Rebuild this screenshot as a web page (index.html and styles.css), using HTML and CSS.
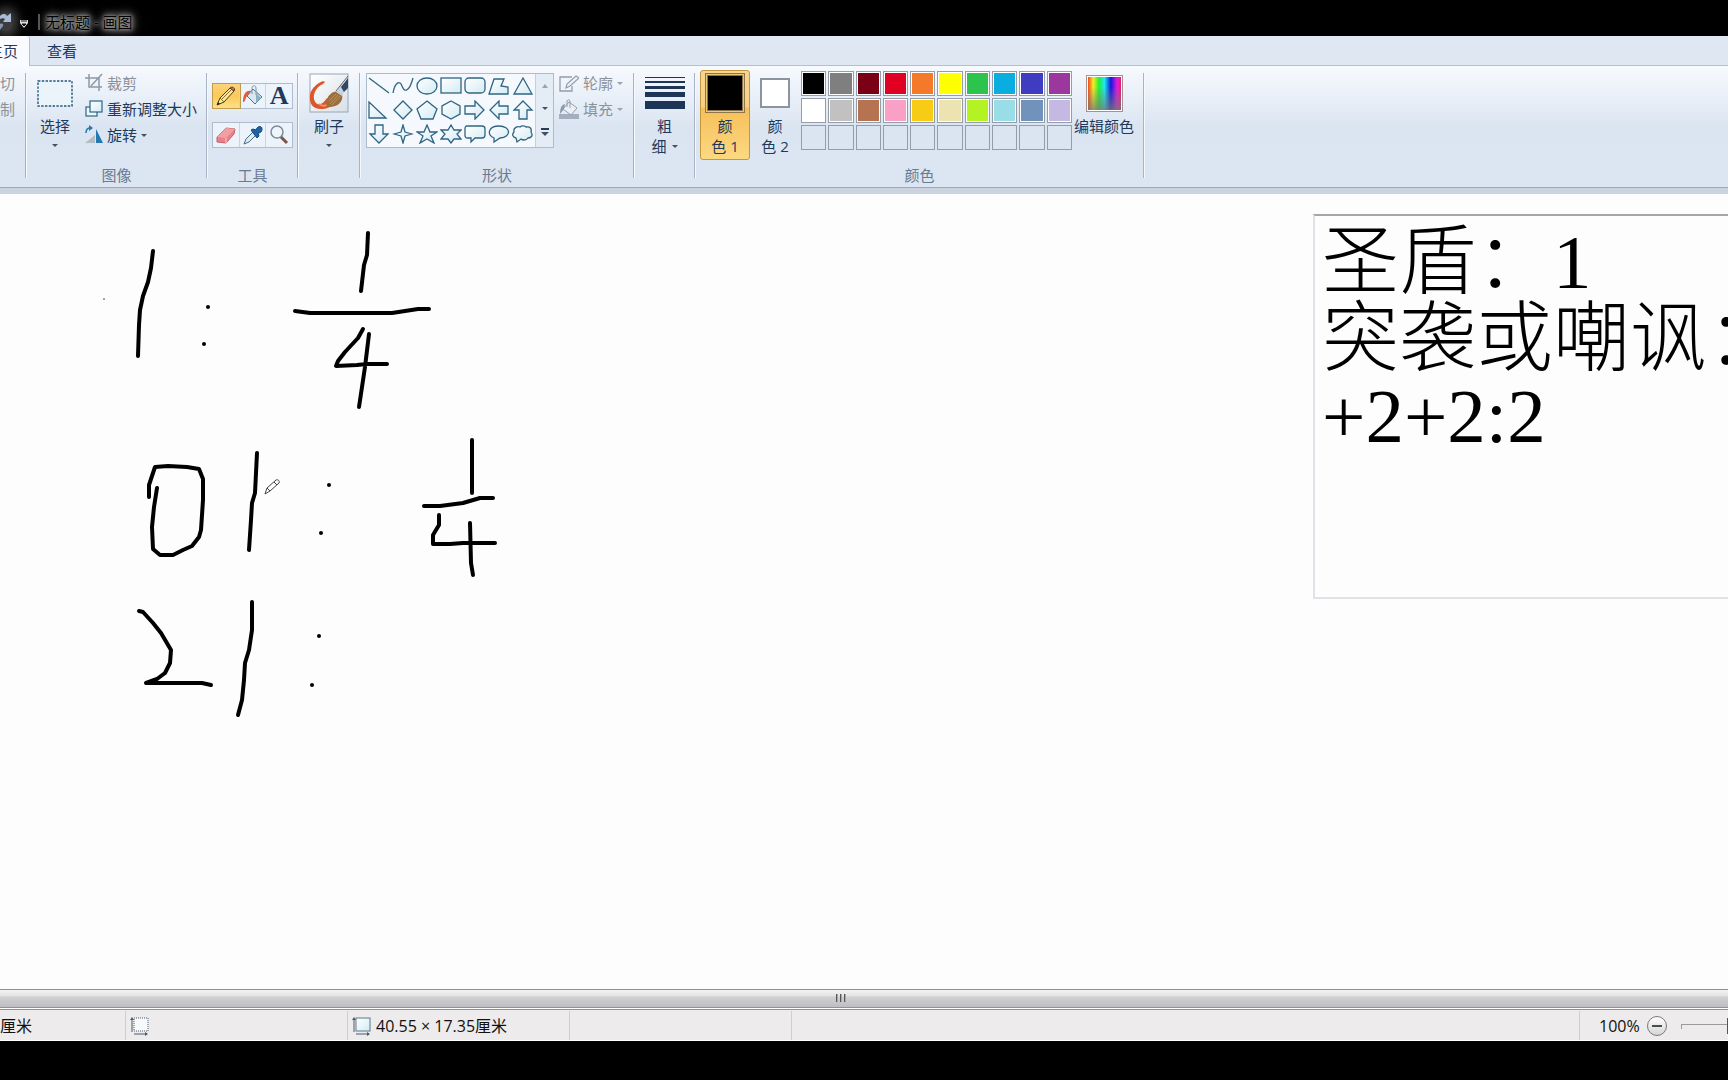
FILE: index.html
```html
<!DOCTYPE html>
<html lang="zh-CN">
<head>
<meta charset="utf-8">
<title>无标题 - 画图</title>
<link rel="stylesheet" href="styles.css">
</head>
<body>
<svg class="defs" width="0" height="0" aria-hidden="true">
  <defs>
    <linearGradient id="tint" x1="0" y1="0" x2="1" y2="1"><stop offset="0" stop-color="#fff"/><stop offset="1" stop-color="#d3ebf3"/></linearGradient>
  </defs>
</svg>
<div class="window">
  <header class="titlebar">
    <button class="redo" aria-label="重做"><svg width="12" height="18" viewBox="0 0 12 18"><path d="M0 3C3 0 6 1 7 3l4-3v9H3l2-3C4 5 2 5 0 6z" fill="#a9bcd6"/><path d="M0 11c2-1 4 0 3 2l-3 4z" fill="#8295b0"/></svg></button>
    <button class="qat" aria-label="自定义"><svg width="8" height="8" viewBox="0 0 8 8"><path d="M0 0h8v3H0zM0 3h8L4 8z" fill="#ddd"/><path d="M1 1h6M2 4h4L4 6z" stroke="#111" fill="#111"/></svg></button>
    <span class="title-sep"></span>
    <h1>无标题 - 画图</h1>
  </header>

  <nav class="tabs">
    <button class="tab active"><span>主页</span></button>
    <button class="tab">查看</button>
  </nav>

  <section class="ribbon">
    <div class="group clipboard">
      <div class="body rows">
        <button class="row muted">剪切</button>
        <button class="row muted">复制</button>
      </div>
    </div>
    <span class="sep"></span>

    <div class="group image">
      <div class="body">
        <button class="big"><span class="pic"><svg width="36" height="27" viewBox="0 0 36 27"><rect x="1" y="1" width="34" height="25" fill="#eaf4fa" stroke="#24577c" stroke-width="1.4" stroke-dasharray="2.4 1.4"/></svg></span>选择<i class="caret"></i></button>
        <div class="rows">
          <button class="row muted"><svg width="18" height="20" viewBox="0 0 18 20"><path d="M0 5h14v13M4 1v13h13M6 13L17 1" fill="none" stroke="#8d98a5" stroke-width="1.5"/></svg>裁剪</button>
          <button class="row"><svg width="18" height="18" viewBox="0 0 18 18"><rect x="1" y="7" width="11" height="9" fill="#eef8fb" stroke="#2a6484" stroke-width="1.2"/><rect x="5" y="1" width="12" height="11" fill="url(#tint)" stroke="#2a6484" stroke-width="1.2"/></svg>重新调整大小</button>
          <button class="row"><svg width="18" height="20" viewBox="0 0 18 20"><path d="M0 18L10 10v8z" fill="#b5bbc2"/><path d="M11 18V4l7 14z" fill="#2678b2"/><path d="M1 8c0-4 2-5 4-5" fill="none" stroke="#2678b2" stroke-width="1.6"/><path d="M4 0l4 3-4 3z" fill="#2678b2"/></svg>旋转<i class="caret"></i></button>
        </div>
      </div>
      <h2>图像</h2>
    </div>
    <span class="sep"></span>

    <div class="group tools">
      <div class="body toolset">
        <div class="toolrow">
          <button class="tool on" aria-label="铅笔"><svg width="22" height="22" viewBox="0 0 22 22"><path d="M2 20l3-7L15 3l4 3L9 17z" fill="#fbe79a" stroke="#4a3c18"/><path d="M5 13l4 4M7 14l9-9" stroke="#8b6b25" fill="none"/><path d="M2 20l1-3 2 2z" fill="#222"/><path d="M15 3c2-2 6 0 4 3z" fill="#d77b68" stroke="#4a3c18"/></svg></button>
          <button class="tool" aria-label="用颜色填充"><svg width="22" height="22" viewBox="0 0 22 22"><path d="M11 4l9 8-7 7-8-8z" fill="#d9e8f0" stroke="#4f7389"/><path d="M14 8l5 5-5 5" fill="#8cb0c4"/><path d="M10 9V3c0-3 4-3 4 0v7" fill="none" stroke="#8296a4"/><path d="M9 6C4 5 1 9 1 17c3 0 2-5 5-7z" fill="#df5c45"/></svg></button>
          <button class="tool letter" aria-label="文本">A</button>
        </div>
        <div class="toolrow">
          <button class="tool" aria-label="橡皮擦"><svg width="22" height="22" viewBox="0 0 22 22"><path d="M2 13L11 4l9 1-1 5-8 9-9-1z" fill="#e8818a" stroke="#c3606b"/><path d="M2 13l9 1 9-9-9-1z" fill="#f0a0a2"/><path d="M11 14v5" stroke="#fbd0cf"/></svg></button>
          <button class="tool" aria-label="颜色选取器"><svg width="22" height="22" viewBox="0 0 22 22"><path d="M2 20l2-5 8-8 3 3-8 8z" fill="#dcecf4" stroke="#4c6c80"/><path d="M9 6l2-1 3 1c1-4 6-5 6-1s-3 4-4 4l1 3-2 2z" fill="#1c64a5" stroke="#164775"/></svg></button>
          <button class="tool" aria-label="放大镜"><svg width="22" height="22" viewBox="0 0 22 22"><circle cx="9" cy="8" r="6" fill="#eef6fc" stroke="#7e8b99" stroke-width="1.5"/><path d="M13 13l6 6" stroke="#7b5748" stroke-width="3"/></svg></button>
        </div>
      </div>
      <h2>工具</h2>
    </div>
    <span class="sep"></span>

    <div class="group brush">
      <div class="body center">
        <button class="big"><span class="pic"><svg width="40" height="40" viewBox="0 0 40 40"><defs><linearGradient id="paper" x1="0" y1="0" x2="1" y2="1"><stop offset="0" stop-color="#fff"/><stop offset="1" stop-color="#d8e0e6"/></linearGradient></defs><rect x="1" y="1" width="38" height="38" fill="url(#paper)" stroke="#98a6b6"/><path d="M16 9C14 6 2 14 1 22c-1 9 3 14 11 14 5 0 11-2 14-6l-8-5c-4 6-8 8-11 5C2 25 6 14 14 11z" fill="#df5428"/><path d="M10 31c4 3 8 2 12-1" stroke="#f19167" stroke-width="2" fill="none"/><path d="M18 34c-3-9 5-18 13-15l2 2c2 8-5 14-15 13z" fill="#9d6f3d"/><path d="M21 31l8-9M23 32l8-9M20 28l7-7" stroke="#c49a63" stroke-width=".8"/><path d="M27 19l6-8 4 4-4 8z" fill="#c8d2da"/><path d="M32 14l7-9v10l-4 4z" fill="#34475e"/><path d="M27 18L39 3" stroke="#59646f"/></svg></span>刷子<i class="caret"></i></button>
      </div>
    </div>
    <span class="sep"></span>

    <div class="group shapes">
      <div class="body">
        <div class="gallery">
          <div class="grid">
            <button aria-label="直线"><svg viewBox="0 0 22 20"><path d="M1 2l20 15"/></svg></button>
            <button aria-label="曲线"><svg viewBox="0 0 22 20"><path d="M1 17C3 6 8 4 10 10s7 7 11-8"/></svg></button>
            <button aria-label="椭圆形"><svg viewBox="0 0 22 20"><ellipse cx="11" cy="10" rx="10" ry="8"/></svg></button>
            <button aria-label="矩形"><svg viewBox="0 0 22 20"><rect x="1" y="2" width="20" height="15"/></svg></button>
            <button aria-label="圆角矩形"><svg viewBox="0 0 22 20"><rect x="1" y="2" width="20" height="15" rx="4"/></svg></button>
            <button aria-label="多边形"><svg viewBox="0 0 22 20"><path d="M6 3h10l-3 7 7 1v7H1z"/></svg></button>
            <button aria-label="三角形"><svg viewBox="0 0 22 20"><path d="M11 2l9 16H2z"/></svg></button>
            <button aria-label="直角三角形"><svg viewBox="0 0 22 20"><path d="M1 2v16h17z"/></svg></button>
            <button aria-label="菱形"><svg viewBox="0 0 22 20"><path d="M11 1l9 9-9 9-9-9z"/></svg></button>
            <button aria-label="五边形"><svg viewBox="0 0 22 20"><path d="M11 1l10 8-4 10H5L1 9z"/></svg></button>
            <button aria-label="六边形"><svg viewBox="0 0 22 20"><path d="M11 1l9 5v8l-9 5-9-5V6z"/></svg></button>
            <button aria-label="右箭头"><svg viewBox="0 0 22 20"><path d="M1 6h10V1l9 9-9 9v-5H1z"/></svg></button>
            <button aria-label="左箭头"><svg viewBox="0 0 22 20"><path d="M20 6H11V1l-9 9 9 9v-5h9z"/></svg></button>
            <button aria-label="上箭头"><svg viewBox="0 0 22 20"><path d="M7 19v-9H2l9-9 9 9h-5v9z"/></svg></button>
            <button aria-label="下箭头"><svg viewBox="0 0 22 20"><path d="M7 1v9H2l9 9 9-9h-5V1z"/></svg></button>
            <button aria-label="四角星形"><svg viewBox="0 0 22 20"><path d="M11 1l2 7 7 2-7 2-2 7-2-7-7-2 7-2z"/></svg></button>
            <button aria-label="五角星形"><svg viewBox="0 0 22 20"><path d="M11 1l3 7h7l-6 4 3 7-7-4-7 4 3-7-6-4h7z"/></svg></button>
            <button aria-label="六角星形"><svg viewBox="0 0 22 20"><path d="M11 1l3 5h7l-4 4 4 5h-7l-3 4-3-4H1l4-5-4-4h7z"/></svg></button>
            <button aria-label="圆角矩形标注"><svg viewBox="0 0 22 20"><path d="M3 2h15q3 0 3 3v6q0 3-3 3h-7l-4 4v-4H3q-2 0-2-3V5q0-3 2-3z"/></svg></button>
            <button aria-label="椭圆形标注"><svg viewBox="0 0 22 20"><path d="M6 14C-2 10 1 2 11 2c12 0 13 11 1 12l-6 4z"/></svg></button>
            <button aria-label="云形标注"><svg viewBox="0 0 22 20"><path d="M4 14c-4-1-4-4-2-6-1-4 3-6 6-5 2-2 5-1 6 0 4-1 6 2 5 5 2 3 1 6-3 6-2 3-6 2-7 1l-4 3z"/></svg></button>
          </div>
          <div class="scroller">
            <button aria-label="上一行"><i class="caret up"></i></button>
            <button aria-label="下一行"><i class="caret"></i></button>
            <button aria-label="更多" class="more"><i class="caret large"></i></button>
          </div>
        </div>
        <div class="rows">
          <button class="row muted"><svg width="20" height="18" viewBox="0 0 20 18"><path d="M13 3H1v14h12v-5" fill="none" stroke="#929dac" stroke-width="1.3"/><path d="M7 14l1-4 9-8 3 2-9 8z" fill="#f0f4f8" stroke="#929dac" stroke-width="1.2"/></svg>轮廓<i class="caret"></i></button>
          <button class="row muted"><svg width="20" height="20" viewBox="0 0 20 20"><path d="M0 15h20v5H0z" fill="#a4aebf"/><path d="M10 3l8 6-6 7-8-6z" fill="#ecf0f5" stroke="#929dac"/><path d="M8 8V2q2-3 3 0v7" fill="none" stroke="#929dac"/><path d="M6 5C2 6 1 10 1 15l4-5z" fill="#8e9aab"/></svg>填充<i class="caret"></i></button>
        </div>
      </div>
      <h2>形状</h2>
    </div>
    <span class="sep"></span>

    <div class="group size">
      <div class="body center">
        <button class="big"><span class="pic"><svg width="40" height="34" viewBox="0 0 40 34"><path d="M0 1h40v1H0zM0 5h40v2H0zM0 10h40v3H0zM0 16h40v5H0zM0 25h40v8H0z" fill="#1d3557"/></svg></span>粗<span class="line">细<i class="caret"></i></span></button>
      </div>
    </div>
    <span class="sep"></span>

    <div class="group colors">
      <div class="body">
        <button class="big slot on"><span class="pic"><span class="chip first"></span></span>颜<span class="line">色 1</span></button>
        <button class="big slot"><span class="pic"><span class="chip"></span></span>颜<span class="line">色 2</span></button>
        <div class="palette">
          <button class="c black" aria-label="黑色"></button><button class="c gray" aria-label="灰色"></button><button class="c maroon" aria-label="深红色"></button><button class="c red" aria-label="红色"></button><button class="c orange" aria-label="橙色"></button><button class="c yellow" aria-label="黄色"></button><button class="c green" aria-label="绿色"></button><button class="c cyan" aria-label="青绿"></button><button class="c indigo" aria-label="靛青"></button><button class="c purple" aria-label="紫色"></button>
          <button class="c white" aria-label="白色"></button><button class="c silver" aria-label="浅灰色"></button><button class="c brown" aria-label="褐色"></button><button class="c pink" aria-label="玫瑰色"></button><button class="c gold" aria-label="金色"></button><button class="c cream" aria-label="浅黄色"></button><button class="c lime" aria-label="酸橙色"></button><button class="c aqua" aria-label="淡青绿色"></button><button class="c steel" aria-label="蓝灰色"></button><button class="c lavender" aria-label="淡紫色"></button>
          <button class="c none" aria-label="自定义 1"></button><button class="c none" aria-label="自定义 2"></button><button class="c none" aria-label="自定义 3"></button><button class="c none" aria-label="自定义 4"></button><button class="c none" aria-label="自定义 5"></button><button class="c none" aria-label="自定义 6"></button><button class="c none" aria-label="自定义 7"></button><button class="c none" aria-label="自定义 8"></button><button class="c none" aria-label="自定义 9"></button><button class="c none" aria-label="自定义 10"></button>
        </div>
        <button class="big edit"><span class="pic"><span class="spectrum"></span></span>编辑颜色</button>
      </div>
      <h2>颜色</h2>
    </div>
    <span class="sep"></span>
  </section>

  <main class="canvas">
    <svg class="ink" width="560" height="600" viewBox="0 194 560 600">
      <g fill="none" stroke="#000" stroke-width="4" stroke-linecap="round" stroke-linejoin="round">
        <path d="M153 251L151 268 148 282 143 296 140 310 139 325 138 356"/>
        <path d="M368 233L367 255 364 265 361 291"/>
        <path d="M295 311L310 313H392L418 309H429"/>
        <path d="M363 329L358 338 345 352 338 361 336 366 357 365 367 364H387M369 334L365 367 362 387 359 407"/>
        <path d="M149 497V485L155 467 168 466 187 467 199 469 203 479V500L201 530 199 537 192 546 183 550 173 555H160L153 549 152 527 154 507 157 488"/>
        <path d="M257 453L255 493 252 503 251 520 249 550"/>
        <path d="M472 440V493M424 506H440L463 503 480 498H493"/>
        <path d="M439 515V525L433 535V544H450L463 543H495M470 523L471 563 473 575"/>
        <path d="M139 611L143 612 153 623 161 633 171 650 170 663 165 673 157 679 146 683H202L211 685"/>
        <path d="M252 602V630L249 650 245 663 244 680 242 700 238 715"/>
      </g>
      <g><circle cx="208" cy="307" r="2"/><circle cx="204" cy="344" r="2"/><circle cx="329" cy="485" r="2"/><circle cx="321" cy="533" r="2"/><circle cx="319" cy="636" r="2"/><circle cx="312" cy="685" r="2"/><circle cx="104" cy="299" r=".7"/></g>
      <path d="M265 494l2-6 9-8c2-1 4 1 3 3l-9 8zM267 488l3 3M274 482l3 3" fill="#fff" stroke="#444"/>
    </svg>
    <div class="pasted">
      <p>圣盾：1</p>
      <p>突袭或嘲讽：</p>
      <p>+2+2:2</p>
    </div>
  </main>

  <div class="hscroll"><button class="grip" aria-label="水平滚动"><i></i><i></i><i></i></button></div>

  <footer class="status">
    <div class="cell pos"><span>厘米</span></div>
    <div class="cell"><svg width="20" height="20" viewBox="0 0 20 20"><path d="M2 3v13M4 18h13" stroke="#4c5a6c"/><path d="M0 4l2-3 2 3zM15 16l3 2-3 2z" fill="#4c5a6c"/><rect x="4" y="2" width="14" height="13" fill="#f7f9fb" stroke="#4c5a6c" stroke-dasharray="1 1"/></svg></div>
    <div class="cell"><svg width="20" height="20" viewBox="0 0 20 20"><path d="M2 3v13M4 18h13" stroke="#4c5a6c"/><path d="M0 4l2-3 2 3zM15 16l3 2-3 2z" fill="#4c5a6c"/><rect x="4" y="2" width="14" height="13" fill="url(#tint)" stroke="#587890"/></svg><span>40.55 × 17.35厘米</span></div>
    <div class="cell"></div>
    <div class="cell fill"></div>
    <div class="cell zoom"><label for="zoom">100%</label><button class="minus" aria-label="缩小"></button><input id="zoom" type="range" min="0" max="100" value="50"></div>
  </footer>
</div>
</body>
</html>
```

FILE: styles.css
```css
* { box-sizing: border-box; }
body { margin: 0; background: #000; }
body, button, input {
  font-family: "Open Sans", "Noto Sans CJK SC", sans-serif;
  font-size: 15px;
  line-height: 20px;
  color: #1e395b;
}
button { margin: 0; padding: 0; border: 0; background: none; white-space: nowrap; }
h1, h2, p { margin: 0; font-weight: 400; }
svg { display: block; flex: none; }
.defs { position: absolute; }

.window { display: flex; flex-direction: column; height: 100vh; padding-bottom: 39px; overflow: hidden; }

/* Title bar */
.titlebar { display: flex; align-items: center; flex: none; height: 36px; padding-top: 8px; overflow: hidden; }
.redo { width: 12px; border-radius: 8px; background: #3c3c3c; box-shadow: 0 0 10px 6px #3c3c3c; }
.qat { margin-left: 8px; padding-top: 3px; }
.title-sep { width: 2px; height: 16px; margin: 0 5px 0 10px; background: #555; }
.titlebar h1 {
  font-size: 15px;
  color: #000;
  text-shadow: 0 0 2px #999, 0 0 4px #999, 0 0 6px #888, 0 0 8px #888, 0 0 12px #777, 0 0 16px #666;
}

/* Tabs */
.tabs { display: flex; flex: none; height: 30px; background: #dfe7f2; border-bottom: 1px solid #b4c0d0; }
.tab { height: 29px; padding: 0 17px; }
.tab.active {
  display: flex;
  justify-content: flex-end;
  align-items: center;
  width: 30px;
  height: 30px;
  padding: 0 11px 0 0;
  border-right: 1px solid #b4c0d0;
  border-radius: 0 3px 0 0;
  background: #f9fbfe;
}

/* Ribbon */
.ribbon {
  display: flex;
  flex: none;
  height: 128px;
  padding-top: 4px;
  background: linear-gradient(#f7fafe, #e8eff8 32px, #dbe5f1 60px, #dce6f2 121px);
  border-bottom: 6px solid #cbd3e1;
  box-shadow: inset 0 -1px #9aa9be;
}
.sep { flex: none; width: 2px; height: 105px; margin-top: 3px; background: #a8b4c5; border-right: 1px solid #f5f8fc; }
.group { flex: none; }
.group h2 { font-size: 15px; line-height: 18px; text-align: center; color: #6a7a91; }
.body { display: flex; height: 96px; }
.center { justify-content: center; }
.clipboard { width: 25px; overflow: hidden; }
.clipboard .rows { align-items: flex-end; padding-right: 10px; }
.image { width: 179px; }
.image .body { padding-left: 10px; gap: 12px; }
.tools { width: 89px; }
.brush { width: 60px; }
.shapes { width: 272px; }
.shapes .body { padding-left: 5px; gap: 5px; }
.size { width: 59px; }
.colors { width: 447px; }
.colors .body { padding-left: 4px; }

.big { display: flex; flex-direction: column; align-items: center; height: 90px; padding-top: 3px; }
.pic { display: flex; align-items: center; justify-content: center; height: 40px; margin-bottom: 3px; }
.big > .caret { margin-top: 8px; }
.line { display: flex; align-items: center; }
.rows { display: flex; flex-direction: column; }
.row { display: flex; align-items: center; gap: 4px; height: 26px; }
.muted { color: #8c929b; }
.caret { width: 0; height: 0; border: 3px solid transparent; border-top-color: #3f5268; border-bottom: 0; }
.line .caret { margin-left: 5px; }
.muted .caret { border-top-color: #9aa3af; }

.toolset { flex-direction: column; align-items: center; gap: 13px; padding-top: 13px; }
.toolrow { display: flex; width: 81px; height: 26px; border: 1px solid #aebccd; background: #edf3fa; }
.tool { display: flex; flex: 1; align-items: center; justify-content: center; height: 24px; border-right: 1px solid #cad5e2; }
.tool:last-child { border-right: 0; }
.tool.on { background: linear-gradient(#fbd37c, #fbc95b 50%, #fde187); box-shadow: 0 0 0 1px #c29b4a; }
.letter { font: 700 26px/24px "Liberation Serif", serif; }

.gallery { display: flex; width: 188px; height: 75px; margin-top: 3px; border: 1px solid #adbccd; background: #f5f9fd; }
.grid { display: grid; flex: 1; grid-template-columns: repeat(7, 24px); grid-auto-rows: 24px; }
.grid button { display: flex; align-items: center; justify-content: center; }
.grid svg { width: 22px; height: 20px; fill: url(#tint); stroke: #2f6484; stroke-width: 1.3; }
.grid button:nth-child(-n+2) svg { fill: none; }
.scroller { display: flex; flex-direction: column; width: 18px; border-left: 1px solid #c5d0de; background: #e4ecf6; }
.scroller button { display: flex; flex: 1; align-items: center; justify-content: center; }
.caret.up { border-top: 0; border-bottom: 4px solid #9aa3af; }
.scroller .more { flex-direction: column; gap: 2px; padding-bottom: 4px; }
.more::before { content: ""; width: 8px; height: 2px; background: #2a3d56; }
.caret.large { border-width: 4px 4px 0; }

.slot { width: 50px; }
.slot.on { padding-top: 2px; border: 1px solid #c2983f; border-radius: 3px; background: linear-gradient(#f8d593, #f9cf83 36px, #f6bf58 37px, #fcd982); }
.chip { width: 30px; height: 30px; border: 2px solid #8d949e; background: #fff; }
.chip.first { width: 40px; height: 40px; border: 1px solid #8d744b; padding: 2px; background: #000; box-shadow: inset 0 0 0 1px #edc778, inset 0 0 0 2px #8d744b; }
.palette { display: grid; flex: none; width: 272px; grid-template-columns: repeat(10, 1fr); grid-auto-rows: 25px; gap: 2px; padding: 1px 0 0 1px; align-content: start; }
.c { border: 1px solid #959da8; box-shadow: inset 0 0 0 1px #fff; }
.black { background: #000; }
.gray { background: #7f7f7f; }
.maroon { background: #7a0016; }
.red { background: #e00024; }
.orange { background: #f47a2a; }
.yellow { background: #ffff00; }
.green { background: #2cc44d; }
.cyan { background: #09addf; }
.indigo { background: #403cc2; }
.purple { background: #9b379d; }
.white { background: #fff; }
.silver { background: #c1c1c1; }
.brown { background: #b67352; }
.pink { background: #fa9fc6; }
.gold { background: #f8cb14; }
.cream { background: #ede3b0; }
.lime { background: #b3f223; }
.aqua { background: #99dee7; }
.steel { background: #7092bb; }
.lavender { background: #c5b8e2; }
.none { box-shadow: none; }
.edit { width: 60px; margin-left: 2px; }
.spectrum {
  width: 37px;
  height: 37px;
  border: 1px solid #a5928c;
  box-shadow: inset 0 0 0 1px #fff;
  background: linear-gradient(transparent 30%, #777c), linear-gradient(90deg, #f02a20, #f5ee20 18%, #21ef38 34%, #1fe9f0 50%, #1616d8 68%, #e21ae0 86%, #e81d4b);
}

/* Drawing area */
.canvas { position: relative; flex: 1; min-height: 0; overflow: hidden; background: #fdfdfd; }
.ink { position: absolute; left: 0; top: 0; }
.pasted {
  position: absolute;
  left: 1313px;
  top: 20px;
  width: 560px;
  height: 385px;
  padding: 8px 0 0 7px;
  border: 2px solid #e0e2e8;
  border-top-color: #a6a6a6;
  color: #000;
  font: 77px/77px "Liberation Serif", "Noto Sans CJK SC Light", "Noto Sans CJK SC", serif;
  white-space: nowrap;
}
.pasted p { font-weight: 300; }

/* Horizontal scroll bar */
.hscroll {
  display: flex;
  justify-content: center;
  flex: none;
  height: 19px;
  padding: 0 46px 2px 0;
  border-top: 1px solid #8f9193;
  border-bottom: 1px solid #929295;
  background: linear-gradient(#f3f3f4, #e3e3e5 6px, #d0d0d3 7px, #bfbfc3);
}
.grip { display: flex; align-items: center; gap: 2px; }
.grip i { width: 2px; height: 8px; background: #555; border-right: 1px solid #aaa; }

/* Status bar */
.status { display: flex; flex: none; height: 33px; padding-top: 2px; overflow: hidden; background: #eeebec; border-top: 1px solid #fff; border-bottom: 1px solid #fff; box-shadow: inset 0 1px #8f9092; }
.cell { display: flex; align-items: center; gap: 4px; flex: none; width: 222px; padding-left: 4px; border-right: 1px solid #cfcfd2; }
.pos { width: 126px; padding: 0; }
.cell.fill { flex: 1; }
.cell.zoom { gap: 0; width: 148px; padding-left: 19px; border: 0; overflow: hidden; }
.minus {
  display: flex;
  align-items: center;
  justify-content: center;
  flex: none;
  width: 20px;
  height: 20px;
  margin: 0 14px 0 7px;
  border: 1px solid #77797c;
  border-radius: 50%;
  background: linear-gradient(#fff, #d5d5d5);
}
.minus::before { content: ""; width: 10px; height: 2px; background: #4b4d50; }
#zoom {
  appearance: none;
  flex: none;
  width: 102px;
  height: 20px;
  margin: 0;
  background: linear-gradient(#9b9b9b, #9b9b9b) 0 8px / 100% 1px no-repeat, linear-gradient(#9b9b9b, #9b9b9b) 0 8px / 1px 5px no-repeat;
}
#zoom::-webkit-slider-thumb { appearance: none; width: 10px; height: 16px; border: 1px solid #555; background: #eee; }
.status span, .status label { font-size: 16px; color: #111; }
```
